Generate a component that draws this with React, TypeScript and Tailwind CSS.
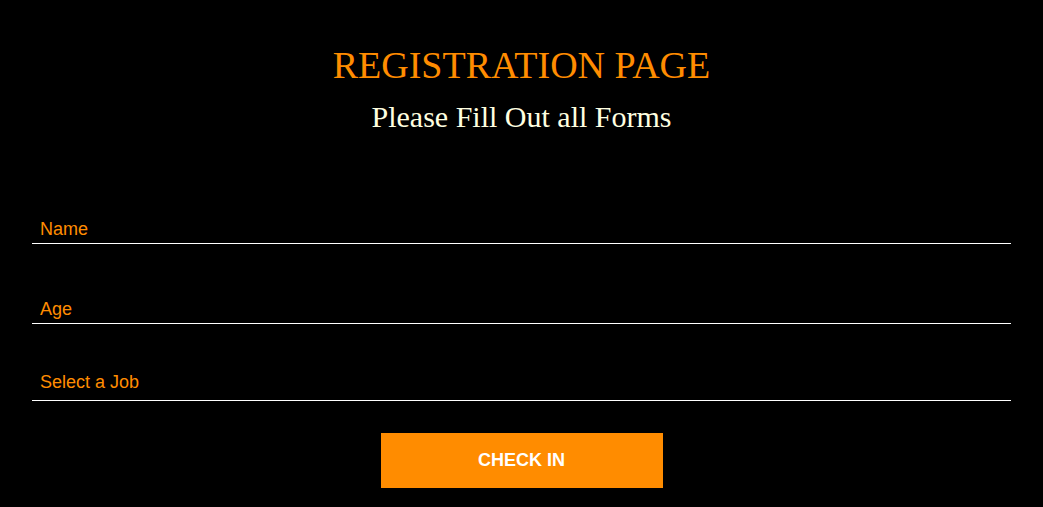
const fields = [
  { label: "Name", height: "h-[111px]", pad: "pb-[3px]" },
  { label: "Age", height: "h-[80px]", pad: "pb-[3px]" },
  { label: "Select a Job", height: "h-[77px]", pad: "pb-[7px]" },
];

export default function App() {
  return (
    <div className="min-h-[507px] w-full bg-black">
      {/* Header */}
      <div className="pt-[44px] text-center font-['Liberation_Serif',serif]">
        <h1 className="text-[38px] leading-[42px] text-[#ff8c00]">REGISTRATION PAGE</h1>
        <h2 className="mt-[15px] text-[30px] leading-[32px] text-[#ffffe0]">
          Please Fill Out all Forms
        </h2>
      </div>

      {/* Form */}
      <form className="px-8 font-['Liberation_Sans',Arial,sans-serif]">
        <div className="flex flex-col">
          {fields.map((f) => (
            <div
              key={f.label}
              className={`flex items-end border-b border-white pl-2 ${f.pad} ${f.height}`}
            >
              <span className="text-[18px] leading-[22px] text-[#ff8c00]">{f.label}</span>
            </div>
          ))}
        </div>
        <div className="flex justify-center pt-[32px] pb-[19px]">
          <button
            type="button"
            className="h-[55px] w-[282px] bg-[#ff8c00] text-[18px] font-bold text-white"
          >
            CHECK IN
          </button>
        </div>
      </form>
    </div>
  );
}
